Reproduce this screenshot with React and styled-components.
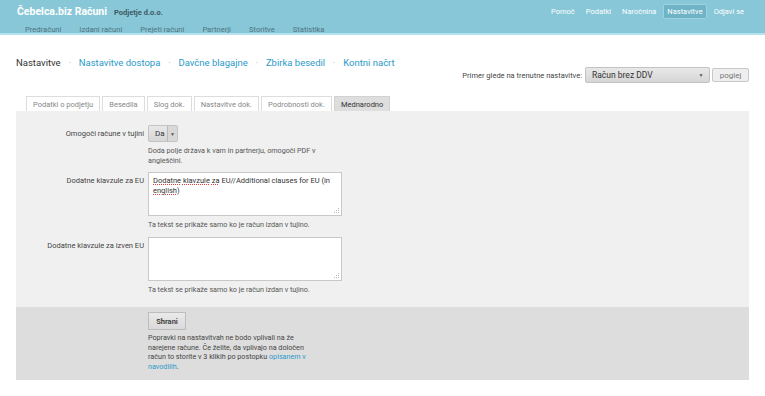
import React from "react";
import styled, { createGlobalStyle } from "styled-components";

const GlobalStyle = createGlobalStyle`
body {
  margin: 0;
  background: #ffffff;
  font-family: Roboto, "Liberation Sans", Arial, sans-serif;
  color: #444444;
}
`;

const Header = styled.div`
height: 33px;
background: #88c7d8;
border-bottom: 2px solid #b3e1ee;
padding: 0 17px;
`;

const TopRow = styled.div`
height: 20px;
padding-top: 1px;
display: flex;
align-items: center;
justify-content: space-between;
`;

const Brand = styled.div`
display: flex;
align-items: baseline;
gap: 7px;
`;

const BrandName = styled.span`
font-size: 10.5px;
font-weight: 700;
color: #ffffff;
`;

const Company = styled.span`
font-size: 7.5px;
font-weight: 700;
color: #3d5a63;
`;

const UserNav = styled.div`
display: flex;
align-items: center;
gap: 3px;
`;

const UserLink = styled.span`
font-size: 7.5px;
color: #ffffff;
padding: 2px 3px;
border-radius: 2px;
background: ${props => props.active ? '#6fb3c6' : 'transparent'};
border: 1px solid ${props => props.active ? '#9dd2e1' : 'transparent'};
`;

const MainNav = styled.div`
display: flex;
gap: 18px;
padding-left: 8px;
padding-top: 2px;
height: 12px;
align-items: center;
`;

const MainLink = styled.span`
font-size: 7.6px;
color: #4f7480;
`;

const Content = styled.div`
padding: 0 16px;
`;

const TopBar = styled.div`
display: flex;
justify-content: space-between;
align-items: flex-start;
padding-top: 20px;
`;

const SubNav = styled.div`
display: flex;
align-items: center;
gap: 8px;
height: 15px;
`;

const SubItem = styled.span`
font-size: 9.5px;
color: ${props => props.current ? '#333333' : '#2b9ac9'};
`;

const Dot = styled.span`
font-size: 8px;
color: #9aa7ad;
`;

const Example = styled.div`
display: flex;
align-items: center;
gap: 2px;
margin-top: 12px;
`;

const ExampleLabel = styled.span`
font-size: 7.5px;
color: #444444;
margin-right: 1px;
`;

const Select = styled.div`
display: flex;
align-items: stretch;
box-sizing: border-box;
width: ${props => props.width}px;
height: ${props => props.height}px;
background: linear-gradient(#e8e8e8, #d6d6d6);
border: 1px solid #c3c3c3;
border-radius: 2px;
font-size: ${props => props.size}px;
color: #333333;
`;

const SelectValue = styled.span`
flex: 1;
display: flex;
align-items: center;
padding-left: 6px;
`;

const Arrow = styled.span`
display: flex;
align-items: center;
justify-content: center;
width: ${props => props.boxed ? 9 : 16}px;
font-size: 5px;
color: #555555;
border-left: ${props => props.boxed ? '1px solid #b8b8b8' : 'none'};
background: ${props => props.boxed ? '#d8d8d8' : 'transparent'};
`;

const SmallButton = styled.button`
box-sizing: border-box;
height: 14px;
width: 37px;
padding: 0;
background: #eeeeee;
border: 1px solid #c8c8c8;
border-radius: 2px;
font-family: inherit;
font-size: 8px;
color: #777777;
`;

const Tabs = styled.div`
display: flex;
gap: 2px;
padding-left: 10px;
margin-top: 13px;
`;

const Tab = styled.div`
box-sizing: border-box;
height: 15px;
padding: 0 6px;
display: flex;
align-items: center;
font-size: 7.5px;
color: ${props => props.active ? '#333333' : '#888888'};
background: ${props => props.active ? '#dedede' : '#ffffff'};
border: 1px solid ${props => props.active ? '#d2d2d2' : '#dddddd'};
border-bottom: none;
`;

const Panel = styled.div`
background: #f0f0f0;
`;

const Form = styled.div`
display: grid;
grid-template-columns: 128px 194px;
column-gap: 4px;
row-gap: 7px;
padding: 14px 0 13px;
`;

const Label = styled.div`
font-size: 7.5px;
color: #444444;
text-align: right;
padding-top: ${props => props.offset}px;
`;

const Field = styled.div`
display: flex;
flex-direction: column;
align-items: flex-start;
`;

const Help = styled.div`
font-size: 7.2px;
line-height: 9.5px;
color: #555555;
margin-top: ${props => props.gap}px;
max-width: 172px;
`;

const TextArea = styled.div`
box-sizing: border-box;
width: 194px;
height: 44px;
background: #ffffff;
border: 1px solid #c8c8c8;
padding: 3px 4px;
font-size: 7.5px;
line-height: 9.5px;
color: #333333;
position: relative;
`;

const Spell = styled.span`
text-decoration: underline dotted #e04040;
text-decoration-thickness: 1px;
text-underline-offset: 1px;
`;

const Grip = styled.svg`
position: absolute;
right: 1px;
bottom: 1px;
`;

const Actions = styled.div`
background: #dddddd;
padding: 5px 0 9px 132px;
`;

const SaveButton = styled.button`
display: block;
box-sizing: border-box;
width: 38px;
height: 18px;
padding: 0;
background: linear-gradient(#eaeaea, #d9d9d9);
border: 1px solid #bdbdbd;
font-family: inherit;
font-size: 7.5px;
font-weight: 700;
color: #444444;
`;

const Note = styled.div`
font-size: 7.2px;
line-height: 9.5px;
color: #444444;
margin-top: 3px;
width: 165px;
`;

const Link = styled.span`
color: #2b9ac9;
`;

function ResizeGrip() {
    return (
        <Grip width="6" height="6" viewBox="0 0 6 6">
            <g fill="#b8b8b8">
                <rect x="4" y="0" width="1" height="1"/>
                <rect x="2" y="2" width="1" height="1"/>
                <rect x="4" y="2" width="1" height="1"/>
                <rect x="0" y="4" width="1" height="1"/>
                <rect x="2" y="4" width="1" height="1"/>
                <rect x="4" y="4" width="1" height="1"/>
            </g>
        </Grip>
    );
}

const userLinks = ["Pomoč", "Podatki", "Naročnina", "Nastavitve", "Odjavi se"];
const mainLinks = ["Predračuni", "Izdani računi", "Prejeti računi", "Partnerji", "Storitve", "Statistika"];
const subLinks = ["Nastavitve dostopa", "Davčne blagajne", "Zbirka besedil", "Kontni načrt"];
const tabs = ["Podatki o podjetju", "Besedila", "Slog dok.", "Nastavitve dok.", "Podrobnosti dok.", "Mednarodno"];

export default function App() {
    return (
        <>
            <GlobalStyle/>
            <Header>
                <TopRow>
                    <Brand>
                        <BrandName>Čebelca.biz Računi</BrandName>
                        <Company>Podjetje d.o.o.</Company>
                    </Brand>
                    <UserNav>
                        {userLinks.map(l => (
                            <UserLink key={l} active={l === "Nastavitve"}>{l}</UserLink>
                        ))}
                    </UserNav>
                </TopRow>
                <MainNav>
                    {mainLinks.map(l => <MainLink key={l}>{l}</MainLink>)}
                </MainNav>
            </Header>

            <Content>
                <TopBar>
                    <SubNav>
                        <SubItem current>Nastavitve</SubItem>
                        {subLinks.map(l => (
                            <React.Fragment key={l}>
                                <Dot>·</Dot>
                                <SubItem>{l}</SubItem>
                            </React.Fragment>
                        ))}
                    </SubNav>
                    <Example>
                        <ExampleLabel>Primer glede na trenutne nastavitve:</ExampleLabel>
                        <Select width={125} height={16} size={8.5}>
                            <SelectValue>Račun brez DDV</SelectValue>
                            <Arrow>▼</Arrow>
                        </Select>
                        <SmallButton>poglej</SmallButton>
                    </Example>
                </TopBar>

                <Tabs>
                    {tabs.map(t => <Tab key={t} active={t === "Mednarodno"}>{t}</Tab>)}
                </Tabs>

                <Panel>
                    <Form>
                        <Label offset={4}>Omogoči račune v tujini</Label>
                        <Field>
                            <Select width={30} height={17} size={8}>
                                <SelectValue>Da</SelectValue>
                                <Arrow boxed>▼</Arrow>
                            </Select>
                            <Help gap={4}>Doda polje država k vam in partnerju, omogoči PDF v angleščini.</Help>
                        </Field>

                        <Label offset={4}>Dodatne klavzule za EU</Label>
                        <Field>
                            <TextArea>
                                <Spell>Dodatne</Spell> <Spell>klavzule</Spell> <Spell>za</Spell> EU//Additional clauses for EU (in <Spell>english</Spell>)
                                <ResizeGrip/>
                            </TextArea>
                            <Help gap={4}>Ta tekst se prikaže samo ko je račun izdan v tujino.</Help>
                        </Field>

                        <Label offset={4}>Dodatne klavzule za izven EU</Label>
                        <Field>
                            <TextArea>
                                <ResizeGrip/>
                            </TextArea>
                            <Help gap={4}>Ta tekst se prikaže samo ko je račun izdan v tujino.</Help>
                        </Field>
                    </Form>
                    <Actions>
                        <SaveButton>Shrani</SaveButton>
                        <Note>
                            Popravki na nastavitvah ne bodo vplivali na že narejene račune. Če želite, da vplivajo na določen račun to storite v 3 klikih po postopku <Link>opisanem v navodilih</Link>.
                        </Note>
                    </Actions>
                </Panel>
            </Content>
        </>
    );
}
